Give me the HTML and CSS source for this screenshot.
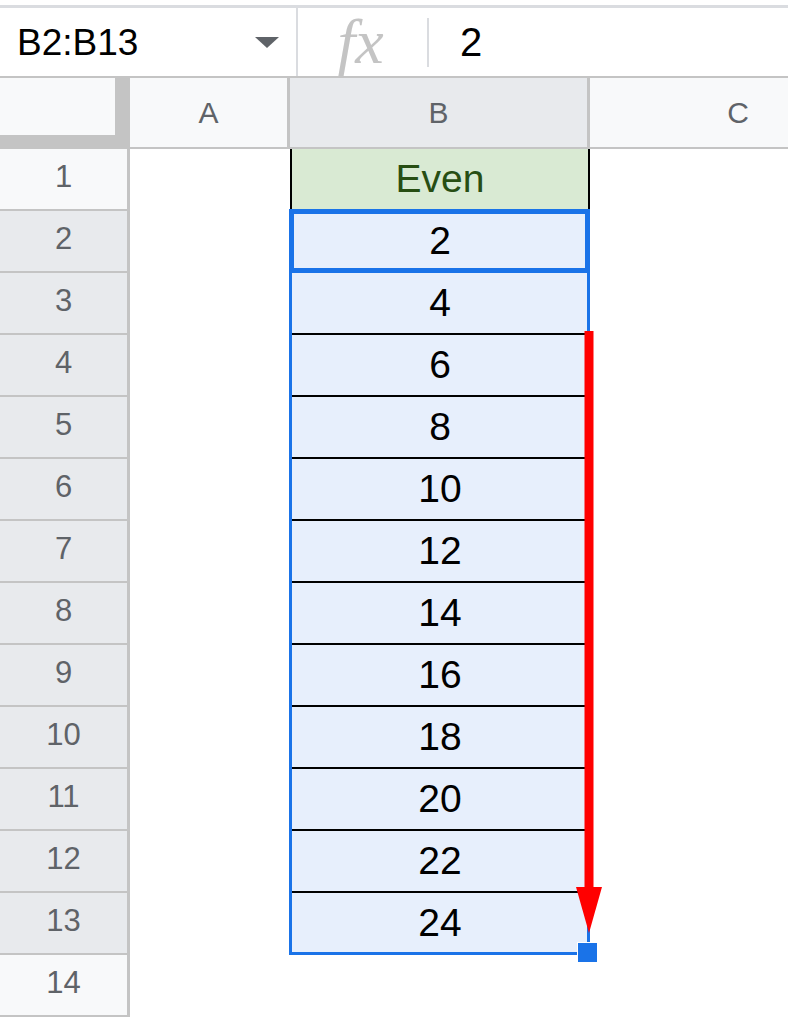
FILE: index.html
```html
<!DOCTYPE html>
<html lang="en">
<head>
    <meta charset="UTF-8">
    <meta name="viewport" content="width=device-width, initial-scale=1.0">
    <title>Even numbers</title>
    <link rel="stylesheet" href="styles.css">
</head>
<body>
    <div class="formula-bar">
        <div class="name-box">
            <span class="ref">B2:B13</span>
            <span class="caret"></span>
        </div>
        <div class="fx">fx</div>
        <div class="formula-value">2</div>
    </div>

    <div class="sheet">
        <div class="corner"></div>
        <div class="col-head">A</div>
        <div class="col-head sel">B</div>
        <div class="col-head last">C</div>

        <div class="row-head">1</div><div class="cell"></div><div class="cell b title">Even</div><div class="cell"></div>
        <div class="row-head sel">2</div><div class="cell"></div><div class="cell b">2</div><div class="cell"></div>
        <div class="row-head sel">3</div><div class="cell"></div><div class="cell b">4</div><div class="cell"></div>
        <div class="row-head sel">4</div><div class="cell"></div><div class="cell b">6</div><div class="cell"></div>
        <div class="row-head sel">5</div><div class="cell"></div><div class="cell b">8</div><div class="cell"></div>
        <div class="row-head sel">6</div><div class="cell"></div><div class="cell b">10</div><div class="cell"></div>
        <div class="row-head sel">7</div><div class="cell"></div><div class="cell b">12</div><div class="cell"></div>
        <div class="row-head sel">8</div><div class="cell"></div><div class="cell b">14</div><div class="cell"></div>
        <div class="row-head sel">9</div><div class="cell"></div><div class="cell b">16</div><div class="cell"></div>
        <div class="row-head sel">10</div><div class="cell"></div><div class="cell b">18</div><div class="cell"></div>
        <div class="row-head sel">11</div><div class="cell"></div><div class="cell b">20</div><div class="cell"></div>
        <div class="row-head sel">12</div><div class="cell"></div><div class="cell b">22</div><div class="cell"></div>
        <div class="row-head sel">13</div><div class="cell"></div><div class="cell b">24</div><div class="cell"></div>
        <div class="row-head">14</div><div class="cell"></div><div class="cell"></div><div class="cell"></div>

        <!-- selection overlays -->
        <div class="range"></div>
        <div class="active"></div>
        <svg class="arrow" width="40" height="604" viewBox="0 0 40 604">
            <rect x="14.5" y="0" width="9" height="560" fill="#ff0000"/>
            <polygon points="6,556 32,556 19,602" fill="#ff0000"/>
        </svg>
        <div class="handle"></div>
    </div>
</body>
</html>
```

FILE: styles.css
```css
body {
    margin: 0;
    background: #fff;
    font-family: 'Liberation Sans', Arial, sans-serif;
    width: 788px;
    height: 1018px;
    overflow: hidden;
}

.formula-bar {
    margin-top: 5px;
    border-top: 3px solid #dadce0;
    border-bottom: 2px solid #c4c4c4;
    height: 68px;
    display: flex;
    align-items: stretch;
}

.name-box {
    width: 298px;
    flex-shrink: 0;
    box-sizing: border-box;
    border-right: 2px solid #dadce0;
    display: flex;
    align-items: center;
    padding: 0 17px 0 17px;
}

.ref {
    font-size: 37px;
    color: #000;
    padding-top: 2px;
}

.caret {
    margin-left: auto;
    width: 0;
    height: 0;
    border-left: 12px solid transparent;
    border-right: 12px solid transparent;
    border-top: 11px solid #5f6368;
}

.fx {
    width: 129px;
    flex-shrink: 0;
    display: flex;
    align-items: center;
    justify-content: center;
    font-family: 'Liberation Serif', 'Times New Roman', serif;
    font-style: italic;
    font-size: 64px;
    color: #c4c4c4;
    position: relative;
    padding-right: 4px;
    box-sizing: border-box;
}

.fx::after {
    content: "";
    position: absolute;
    right: -2px;
    top: 10px;
    bottom: 9px;
    width: 2px;
    background: #dadce0;
}

.formula-value {
    display: flex;
    align-items: center;
    padding-left: 33px;
    font-size: 40px;
    color: #000;
}

.sheet {
    position: relative;
    display: grid;
    grid-template-columns: 130px 160px 300px 198px;
    grid-template-rows: 71px repeat(14, 62px);
}

.sheet > div {
    box-sizing: border-box;
}

.corner {
    background: #f8f9fa;
    border-right: 15px solid #c4c4c4;
    border-bottom: 14px solid #c4c4c4;
}

.col-head {
    background: #f8f9fa;
    border-right: 3px solid #c4c4c4;
    border-bottom: 2px solid #c4c4c4;
    display: flex;
    align-items: center;
    justify-content: center;
    font-size: 30px;
    color: #5f6368;
}

.col-head.sel {
    background: #e8eaed;
}

/* column C runs on past the window edge, so its label sits off-centre */
.col-head.last {
    border-right: none;
    padding-left: 98px;
}

.row-head {
    background: #f8f9fa;
    border-right: 3px solid #c4c4c4;
    border-bottom: 2px solid #c4c4c4;
    display: flex;
    align-items: center;
    justify-content: center;
    font-size: 31px;
    color: #5f6368;
    padding-bottom: 4px;
}

.row-head.sel {
    background: #e8eaed;
}

.cell {
    background: #fff;
}

.cell.b {
    background: #e7effc;
    border-left: 2px solid #000;
    border-right: 2px solid #000;
    border-bottom: 2px solid #000;
    display: flex;
    align-items: center;
    justify-content: center;
    font-size: 39px;
    color: #000;
}

.cell.title {
    background: #d9ead3;
    color: #274e13;
}

.range {
    position: absolute;
    left: 289px;
    top: 131px;
    width: 301px;
    height: 746px;
    border: 3px solid #1a73e8;
    box-sizing: border-box;
}

.active {
    position: absolute;
    left: 289px;
    top: 131px;
    width: 301px;
    height: 64px;
    border: 5px solid #1a73e8;
    box-sizing: border-box;
}

.arrow {
    position: absolute;
    left: 570px;
    top: 253px;
}

.handle {
    position: absolute;
    left: 577px;
    top: 864px;
    width: 21px;
    height: 21px;
    box-sizing: border-box;
    background: #1a73e8;
    border: 1px solid #fff;
}
```
